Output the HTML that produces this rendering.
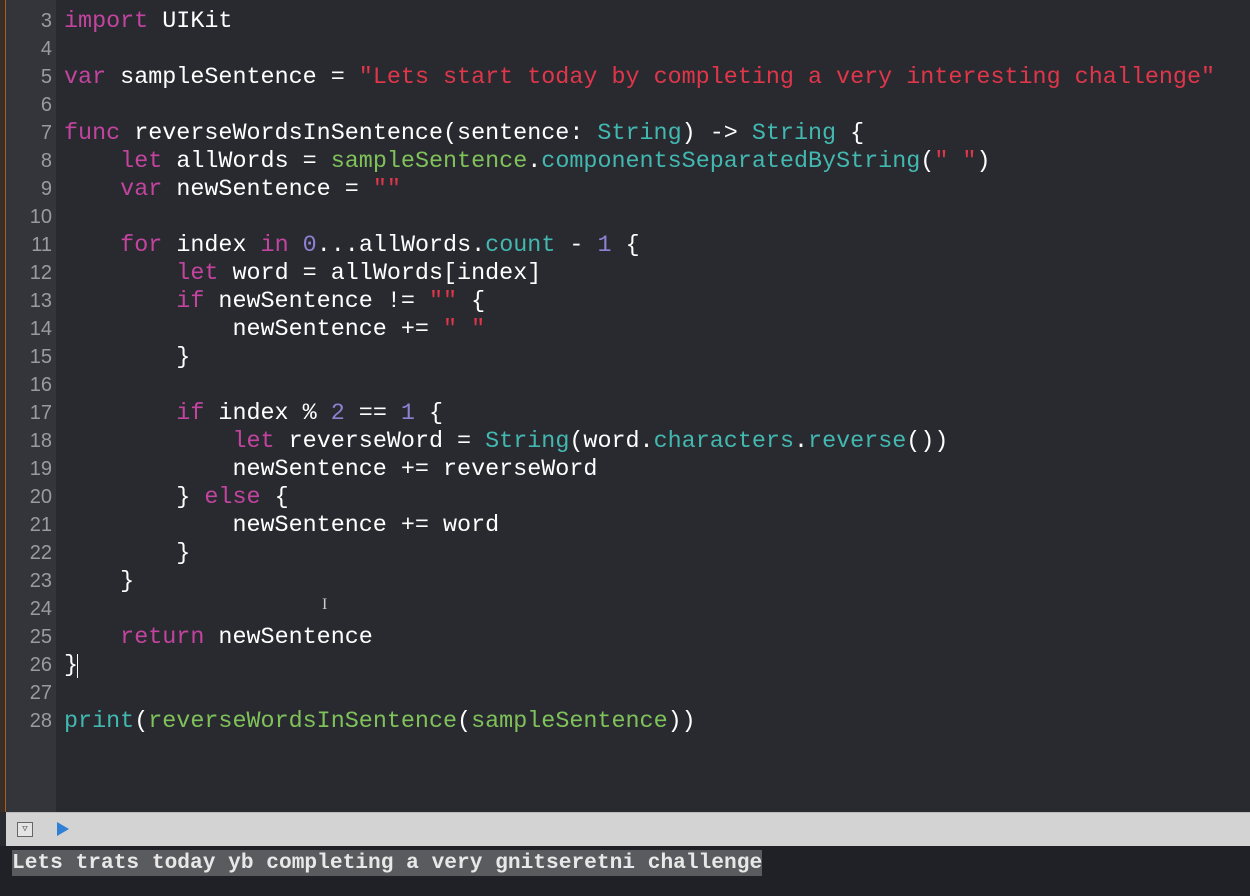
<!DOCTYPE html>
<html><head><style>
body{margin:0;width:1250px;height:896px;background:#292a30;overflow:hidden;position:relative;font-family:"Liberation Mono",monospace}
#edge{position:absolute;left:0;top:0;width:5px;height:812px;background:#3a2f26;border-right:1px solid #a0602a}
#gut{position:absolute;left:6px;top:0;width:50px;height:812px;background:#34353b}
.ln{position:absolute;left:6px;width:46px;text-align:right;color:#9a9ba0;font-size:20px;font-family:"Liberation Sans",sans-serif;margin-top:2px}
.c{position:absolute;left:64px;top:8px;color:#fff;font-size:23.4px;white-space:pre;line-height:28px}
.k{color:#c2449e}.s{color:#e0364a}.g{color:#7fc25a}.t{color:#42b8b0}.n{color:#8c82d4}
#bar{position:absolute;left:6px;top:812px;width:1244px;height:33px;background:#d3d3d3;border-top:1px solid #bbb}
#out{position:absolute;left:0;top:846px;width:1250px;height:50px;background:#202126}
#txt{position:absolute;left:12px;top:850px;background:#5a5b5f;color:#e8e8e8;font-size:21.2px;font-weight:bold;line-height:26px;white-space:pre}
</style></head><body>
<div id="edge"></div><div id="gut"></div>
<div class="c"><span class="k">import</span> UIKit

<span class="k">var</span> sampleSentence = <span class="s">"Lets start today by completing a very interesting challenge"</span>

<span class="k">func</span> reverseWordsInSentence(sentence: <span class="t">String</span>) -&gt; <span class="t">String</span> {
    <span class="k">let</span> allWords = <span class="g">sampleSentence</span>.<span class="t">componentsSeparatedByString</span>(<span class="s">" "</span>)
    <span class="k">var</span> newSentence = <span class="s">""</span>

    <span class="k">for</span> index <span class="k">in</span> <span class="n">0</span>...allWords.<span class="t">count</span> - <span class="n">1</span> {
        <span class="k">let</span> word = allWords[index]
        <span class="k">if</span> newSentence != <span class="s">""</span> {
            newSentence += <span class="s">" "</span>
        }

        <span class="k">if</span> index % <span class="n">2</span> == <span class="n">1</span> {
            <span class="k">let</span> reverseWord = <span class="t">String</span>(word.<span class="t">characters</span>.<span class="t">reverse</span>())
            newSentence += reverseWord
        } <span class="k">else</span> {
            newSentence += word
        }
    }

    <span class="k">return</span> newSentence
}

<span class="t">print</span>(<span class="g">reverseWordsInSentence</span>(<span class="g">sampleSentence</span>))</div>
<div class="ln" style="top:8px">3</div><div class="ln" style="top:36px">4</div><div class="ln" style="top:64px">5</div><div class="ln" style="top:92px">6</div><div class="ln" style="top:120px">7</div><div class="ln" style="top:148px">8</div><div class="ln" style="top:176px">9</div><div class="ln" style="top:204px">10</div><div class="ln" style="top:232px">11</div><div class="ln" style="top:260px">12</div><div class="ln" style="top:288px">13</div><div class="ln" style="top:316px">14</div><div class="ln" style="top:344px">15</div><div class="ln" style="top:372px">16</div><div class="ln" style="top:400px">17</div><div class="ln" style="top:428px">18</div><div class="ln" style="top:456px">19</div><div class="ln" style="top:484px">20</div><div class="ln" style="top:512px">21</div><div class="ln" style="top:540px">22</div><div class="ln" style="top:568px">23</div><div class="ln" style="top:596px">24</div><div class="ln" style="top:624px">25</div><div class="ln" style="top:652px">26</div><div class="ln" style="top:680px">27</div><div class="ln" style="top:708px">28</div>
<div style="position:absolute;left:77px;top:654px;width:1px;height:24px;background:#fff"></div>
<div style="position:absolute;left:322px;top:596px;color:#ccc;font-size:16px;font-family:'Liberation Serif',serif">I</div>
<div id="bar">
<div style="position:absolute;left:11px;top:9px;width:14px;height:13px;border:1px solid #666;background:#e4e4e4;font-size:9px;line-height:13px;text-align:center;color:#555">▽</div>
<svg style="position:absolute;left:50px;top:8px" width="14" height="16"><path d="M1 1 L13 8 L1 15Z" fill="#2f7fd6"/></svg>
</div>
<div id="out"></div>
<div id="txt">Lets trats today yb completing a very gnitseretni challenge</div>
</body></html>
